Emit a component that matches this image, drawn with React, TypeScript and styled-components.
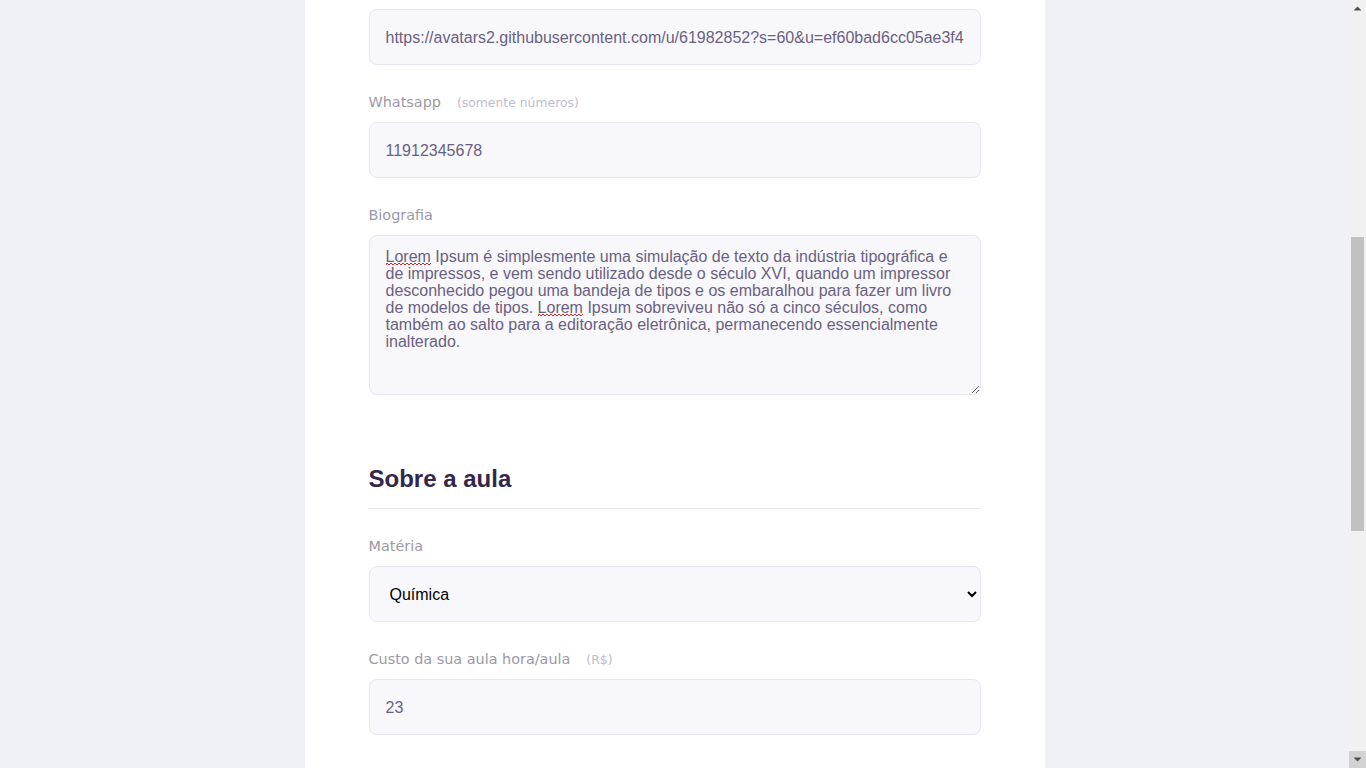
import React, { useLayoutEffect, useRef } from "react";
import styled, { createGlobalStyle } from "styled-components";

const GlobalStyle = createGlobalStyle`
  *, *::before, *::after { box-sizing: border-box; }
  html { scroll-behavior: auto; }
  body {
    margin: 0;
    background: #f0f0f7;
    font-family: "Liberation Sans", Arial, sans-serif;
  }
`;

const Page = styled.div`
  width: calc(100% - 17px);
  display: flex;
  flex-direction: column;
  align-items: center;
`;

const Header = styled.header`
  width: 100%;
  height: 340px;
  background: #8257e5;
  display: flex;
  flex-direction: column;
  align-items: center;
`;

const TopBar = styled.div`
  width: 90%;
  max-width: 1100px;
  display: flex;
  align-items: center;
  justify-content: space-between;
  padding: 16px 0;
  color: #d4c2ff;
`;

const Logo = styled.span`
  font-family: "Liberation Sans", Arial, sans-serif;
  font-weight: 700;
  font-size: 22px;
  color: #ffffff;
`;

const HeaderContent = styled.div`
  width: 740px;
  padding: 40px 0 0;
`;

const HeaderTitle = styled.strong`
  display: block;
  max-width: 350px;
  font-family: "Liberation Sans", Arial, sans-serif;
  font-weight: 700;
  font-size: 36px;
  line-height: 42px;
  color: #ffffff;
`;

const HeaderText = styled.p`
  max-width: 300px;
  margin: 24px 0 0;
  font-family: "DejaVu Sans", sans-serif;
  font-size: 15px;
  line-height: 26px;
  color: #d4c2ff;
`;

const Card = styled.main`
  width: 740px;
  background: #ffffff;
  border-radius: 8px;
  margin: -32px auto 32px;
  padding-top: 64px;
  overflow: hidden;
`;

const Section = styled.section<{ $gap?: number }>`
  padding: 0 64px;
  margin-top: ${(p) => p.$gap ?? 0}px;
  display: flex;
  flex-direction: column;
`;

const Legend = styled.h2`
  margin: 0 0 24px;
  padding-bottom: 16px;
  border-bottom: 1px solid #e6e6f0;
  display: flex;
  align-items: center;
  justify-content: space-between;
  font-family: "Liberation Sans", Arial, sans-serif;
  font-weight: 700;
  font-size: 24px;
  line-height: 27.6px;
  color: #32264d;
`;

const AddButton = styled.button`
  background: none;
  border: 0;
  padding: 0;
  font-family: "Liberation Sans", Arial, sans-serif;
  font-weight: 700;
  font-size: 16px;
  color: #8257e5;
  cursor: pointer;
`;

const Block = styled.div`
  display: flex;
  flex-direction: column;
  & + & { margin-top: 24px; }
`;

const Label = styled.label`
  display: block;
  height: 26px;
  font-family: "DejaVu Sans", sans-serif;
  font-size: 14.4px;
  line-height: 26px;
  color: #9c98a6;
`;

const Hint = styled.span`
  margin-left: 16px;
  font-size: 12.4px;
  line-height: 1;
  color: #c1bccc;
`;

const Input = styled.input`
  width: 100%;
  height: 56px;
  margin-top: 7px;
  border-radius: 8px;
  background: #f8f8fc;
  border: 1px solid #e6e6f0;
  outline: 0;
  padding: 2px 16px 0;
  font-family: "Liberation Sans", Arial, sans-serif;
  font-size: 16px;
  color: #6a6180;
`;

const TextAreaWrap = styled.div`
  position: relative;
  margin-top: 7px;
`;

const TextArea = styled.textarea`
  display: block;
  width: 100%;
  height: 160px;
  min-height: 80px;
  border-radius: 8px;
  background: #f8f8fc;
  border: 1px solid #e6e6f0;
  outline: 0;
  resize: vertical;
  padding: 12px 16px;
  font-family: "Liberation Sans", Arial, sans-serif;
  font-size: 16px;
  line-height: 17px;
  color: #6a6180;
`;

const SquiggleSvg = styled.svg`
  position: absolute;
  height: 4px;
  pointer-events: none;
`;

const Select = styled.select`
  width: 100%;
  height: 56px;
  margin-top: 7px;
  border-radius: 8px;
  background: #f8f8fc;
  border: 1px solid #e6e6f0;
  outline: 0;
  padding: 0 16px;
  font-family: "Liberation Sans", Arial, sans-serif;
  font-size: 16px;
  color: #000000;
`;

const ScheduleItem = styled.div`
  display: grid;
  grid-template-columns: 2fr 1fr 1fr;
  column-gap: 16px;
  & + & { margin-top: 24px; }
`;

const Footer = styled.footer`
  margin-top: 64px;
  padding: 60px 64px;
  background: #fafafc;
  border-top: 1px solid #e6e6f0;
  display: flex;
  align-items: center;
  justify-content: space-between;
`;

const Warning = styled.p`
  margin: 0;
  display: flex;
  align-items: center;
  gap: 16px;
  font-family: "DejaVu Sans", sans-serif;
  font-size: 13px;
  line-height: 20px;
  color: #a0a0b2;
`;

const WarnStrong = styled.strong`
  display: block;
  color: #8257e5;
`;

const SaveButton = styled.button`
  width: 200px;
  height: 56px;
  border: 0;
  border-radius: 8px;
  background: #04d361;
  color: #ffffff;
  font-family: "Liberation Sans", Arial, sans-serif;
  font-weight: 700;
  font-size: 16px;
  cursor: pointer;
`;

/* Drawn window scrollbar (the browser's own is hidden in the capture) */
const ScrollTrack = styled.div`
  position: fixed;
  top: 0;
  right: 0;
  width: 17px;
  height: 100vh;
  background: #f1f1f1;
  display: flex;
  flex-direction: column;
  justify-content: space-between;
  z-index: 10;
`;

const ScrollButton = styled.div<{ $active?: boolean }>`
  width: 17px;
  height: 17px;
  display: flex;
  align-items: center;
  justify-content: center;
  background: ${(p) => (p.$active ? "#d2d2d2" : "transparent")};
`;

const ScrollThumb = styled.div`
  position: absolute;
  left: 2px;
  width: 13px;
  background: #c1c1c1;
`;

const bio =
  "Lorem Ipsum é simplesmente uma simulação de texto da indústria tipográfica e de impressos, e vem sendo utilizado desde o século XVI, quando um impressor desconhecido pegou uma bandeja de tipos e os embaralhou para fazer um livro de modelos de tipos. Lorem Ipsum sobreviveu não só a cinco séculos, como também ao salto para a editoração eletrônica, permanecendo essencialmente inalterado.";

const subjects = [
  "Artes",
  "Biologia",
  "Ciências",
  "Educação física",
  "Física",
  "Geografia",
  "História",
  "Matemática",
  "Português",
  "Química",
];

const weekDays = [
  "Domingo",
  "Segunda-feira",
  "Terça-feira",
  "Quarta-feira",
  "Quinta-feira",
  "Sexta-feira",
  "Sábado",
];

const BackArrow = () => (
  <svg width="24" height="24" viewBox="0 0 24 24" fill="none" stroke="#ffffff" strokeWidth="2" strokeLinecap="round" strokeLinejoin="round">
    <path d="M19 12H5" />
    <path d="M12 19l-7-7 7-7" />
  </svg>
);

const WarningIcon = () => (
  <svg width="32" height="32" viewBox="0 0 32 32" fill="none">
    <rect x="2" y="2" width="28" height="28" rx="8" stroke="#8257e5" strokeWidth="2" />
    <path d="M16 9v9" stroke="#8257e5" strokeWidth="2.5" strokeLinecap="round" />
    <circle cx="16" cy="23" r="1.5" fill="#8257e5" />
  </svg>
);

const Squiggle = ({ left, top, width }: { left: number; top: number; width: number }) => {
  let d = "M0 3";
  for (let x = 0; x < width; x += 2) {
    d += ` L${x + 1} ${(x / 2) % 2 === 0 ? 1 : 3}`;
  }
  return (
    <SquiggleSvg width={width} viewBox={`0 0 ${width} 4`} style={{ left, top }}>
      <path d={d} fill="none" stroke="#e2231a" strokeWidth="1" />
    </SquiggleSvg>
  );
};

const Arrow = ({ up }: { up?: boolean }) => (
  <svg width="9" height="5" viewBox="0 0 9 5">
    <path d={up ? "M0.5 4.5 L4.5 0.5 L8.5 4.5 Z" : "M0.5 0.5 L4.5 4.5 L8.5 0.5 Z"} fill="#505050" />
  </svg>
);

export default function App() {
  const avatarRef = useRef<HTMLInputElement>(null);

  useLayoutEffect(() => {
    const go = () => {
      const el = avatarRef.current;
      if (!el) return;
      const top = el.getBoundingClientRect().top + window.scrollY;
      window.scrollTo(0, top - 9);
    };
    go();
    const t = window.setTimeout(go, 0);
    return () => window.clearTimeout(t);
  }, []);

  return (
    <>
      <GlobalStyle />
      <Page>
        <Header>
          <TopBar>
            <BackArrow />
            <Logo>Proffy</Logo>
          </TopBar>
          <HeaderContent>
            <HeaderTitle>Que incrível que você quer dar aulas.</HeaderTitle>
            <HeaderText>O primeiro passo é preencher esse formulário de inscrição</HeaderText>
          </HeaderContent>
        </Header>

        <Card>
          <Section>
            <Legend>Seus dados</Legend>
            <Block>
              <Label htmlFor="name">Nome completo</Label>
              <Input id="name" defaultValue="Diego Fernandes" />
            </Block>
            <Block>
              <Label htmlFor="avatar">Avatar</Label>
              <Input
                id="avatar"
                ref={avatarRef}
                defaultValue="https://avatars2.githubusercontent.com/u/61982852?s=60&u=ef60bad6cc05ae3f4"
              />
            </Block>
            <Block>
              <Label htmlFor="whatsapp">
                Whatsapp<Hint>(somente números)</Hint>
              </Label>
              <Input id="whatsapp" defaultValue="11912345678" />
            </Block>
            <Block>
              <Label htmlFor="bio">Biografia</Label>
              <TextAreaWrap>
                <TextArea id="bio" spellCheck defaultValue={bio} />
                <Squiggle left={17} top={27} width={45} />
                <Squiggle left={169} top={78} width={45} />
              </TextAreaWrap>
            </Block>
          </Section>

          <Section $gap={70}>
            <Legend>Sobre a aula</Legend>
            <Block>
              <Label htmlFor="subject">Matéria</Label>
              <Select id="subject" defaultValue="Química">
                {subjects.map((s) => (
                  <option key={s} value={s}>
                    {s}
                  </option>
                ))}
              </Select>
            </Block>
            <Block>
              <Label htmlFor="cost">
                Custo da sua aula hora/aula<Hint>(R$)</Hint>
              </Label>
              <Input id="cost" defaultValue="23" />
            </Block>
          </Section>

          <Section $gap={70}>
            <Legend>
              Horários disponíveis
              <AddButton type="button">+ Novo horário</AddButton>
            </Legend>
            {[
              { day: "Segunda-feira", from: "08:00", to: "12:00" },
              { day: "Quarta-feira", from: "14:00", to: "18:00" },
            ].map((item, i) => (
              <ScheduleItem key={i}>
                <Block>
                  <Label>Dia da semana</Label>
                  <Select defaultValue={item.day}>
                    {weekDays.map((d) => (
                      <option key={d} value={d}>
                        {d}
                      </option>
                    ))}
                  </Select>
                </Block>
                <Block>
                  <Label>Das</Label>
                  <Input type="time" defaultValue={item.from} />
                </Block>
                <Block>
                  <Label>Até</Label>
                  <Input type="time" defaultValue={item.to} />
                </Block>
              </ScheduleItem>
            ))}
          </Section>

          <Footer>
            <Warning>
              <WarningIcon />
              <span>
                <WarnStrong>Importante!</WarnStrong>
                Preencha todos os dados
              </span>
            </Warning>
            <SaveButton type="button">Salvar cadastro</SaveButton>
          </Footer>
        </Card>
      </Page>

      <ScrollTrack aria-hidden>
        <ScrollButton>
          <Arrow up />
        </ScrollButton>
        <ScrollThumb style={{ top: 237, height: 294 }} />
        <ScrollButton $active>
          <Arrow />
        </ScrollButton>
      </ScrollTrack>
    </>
  );
}
